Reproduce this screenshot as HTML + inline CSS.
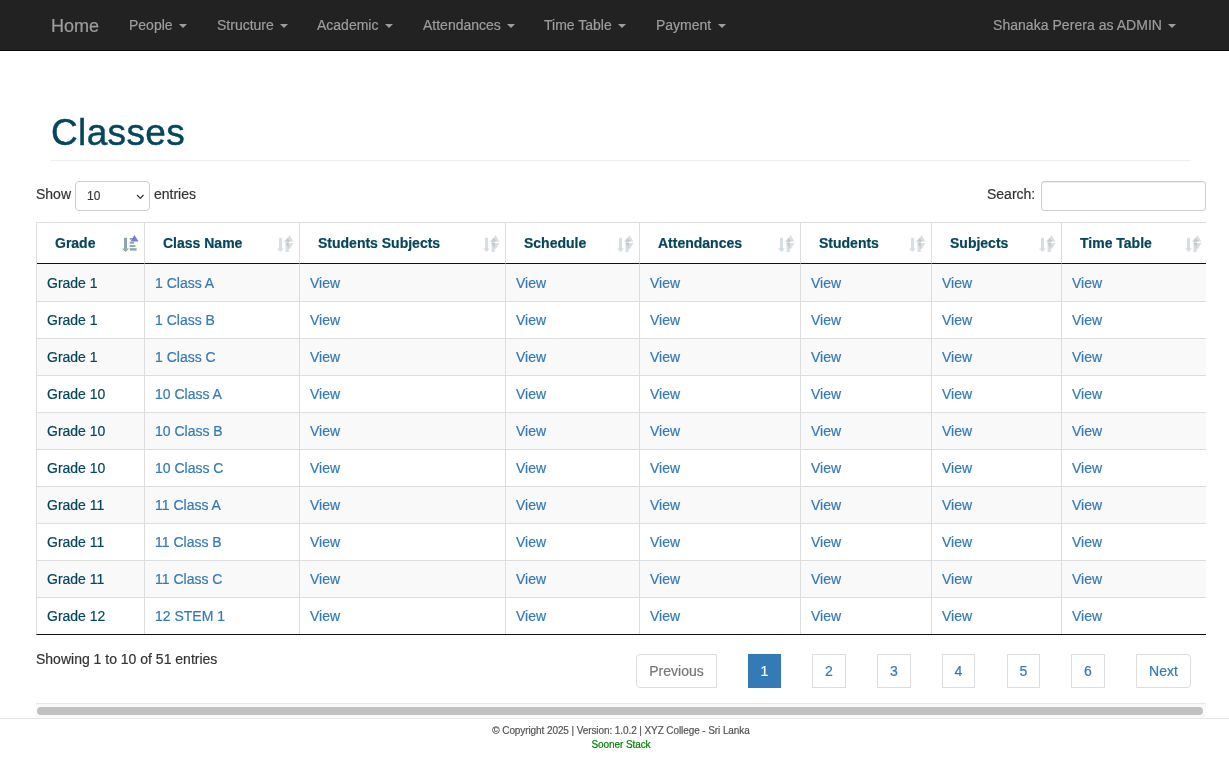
<!DOCTYPE html>
<html><head><meta charset="utf-8"><title>Classes</title>
<style>
*{box-sizing:border-box}
html,body{margin:0;padding:0}
body{width:1229px;height:766px;overflow:hidden;background:#fff;font-family:"Liberation Sans",sans-serif;font-size:14px;line-height:20px;color:#04465c;position:relative}
a{color:#337ab7;text-decoration:none}
.nav{position:absolute;left:0;top:0;width:1229px;height:51px;background:#222;border-bottom:1px solid #080808;color:#9d9d9d}
.nav span{position:absolute;top:15px;white-space:nowrap;line-height:20px}
.nav .brand{font-size:18px;left:51px;top:16px}
.caret{display:inline-block;width:0;height:0;margin-left:2.5px;vertical-align:middle;border-top:4px solid #9d9d9d;border-right:4px solid transparent;border-left:4px solid transparent}
h1{position:absolute;left:51px;top:113px;margin:0;font-size:37px;line-height:40px;font-weight:normal;color:#04465c;white-space:nowrap;letter-spacing:.35px;-webkit-text-stroke:.45px #04465c}
.hr{position:absolute;left:51px;top:160px;width:1140px;height:1px;background:#eee}
.len,.len2,.srch,.info{color:#333}
.len{position:absolute;left:36px;top:184px;white-space:nowrap}
.sel{position:absolute;left:75px;top:181px;width:75px;height:30px;border:1px solid #ccc;border-radius:4px;background:#fff;font-size:12px;color:#3a3a3a;line-height:28px;padding-left:11px}
.len2{position:absolute;left:154px;top:184px}
.srch{position:absolute;left:987px;top:184px}
.inp{position:absolute;left:1041px;top:181px;width:165px;height:30px;border:1px solid #ccc;border-radius:3px;background:#fff;box-shadow:inset 0 1px 1px rgba(0,0,0,.075)}
.tw{position:absolute;left:36px;top:222px;width:1170px;height:414px;overflow:hidden}
table{border-collapse:separate;border-spacing:0;table-layout:fixed;width:1171px;border-top:1px solid #ddd;border-left:1px solid #ddd;border-bottom:1px solid #111}
th{position:relative;padding:10px 18px;text-align:left;font-weight:bold;border-bottom:1px solid #111;border-right:1px solid #ddd;height:41px;white-space:nowrap}
td{padding:8px 10px;border-top:1px solid #ddd;border-right:1px solid #ddd;height:37px;white-space:nowrap}
tbody tr:first-child td{border-top:0;height:37px;padding-top:9px}
tbody tr:nth-child(odd) td{background:#f9f9f9}
.si{position:absolute;right:1px;top:10px}
.info{position:absolute;left:36px;top:649px}
.pg,.pb{position:absolute;top:654px;height:34px;border:1px solid #ddd;background:#fff;padding:6px 12px;line-height:20px;text-align:center}
.pg{width:34px;padding:6px 0}
.pg.act{background:#337ab7;border-color:#337ab7;color:#fff}
.sb{position:absolute;left:36px;top:703px;width:1170px;height:15px;background:#fafafa;border-top:1px solid #e8e8e8}
.sb i{position:absolute;left:1px;top:3px;width:1166px;height:8px;border-radius:4px;background:#c1c1c1}
.fl{position:absolute;left:0;top:718px;width:1229px;height:1px;background:#e7e7e7}
.ft{position:absolute;left:0;width:1242px;text-align:center;font-size:10px;line-height:14px;color:#555;letter-spacing:-.09px}
#L{position:absolute;left:0;top:0;width:1229px;height:766px;will-change:transform;-webkit-text-stroke:.2px}
</style></head><body><div id="L">
<div class="nav">
<span class="brand">Home</span>
<span style="left:129px">People <b class="caret"></b></span>
<span style="left:217px">Structure <b class="caret"></b></span>
<span style="left:317px">Academic <b class="caret"></b></span>
<span style="left:423px">Attendances <b class="caret"></b></span>
<span style="left:544px">Time Table <b class="caret"></b></span>
<span style="left:656px">Payment <b class="caret"></b></span>
<span style="left:993px;letter-spacing:.04px">Shanaka Perera as ADMIN <b class="caret"></b></span>
</div>
<h1>Classes</h1>
<div class="hr"></div>
<div class="len">Show</div>
<div class="sel">10<svg width="9" height="6" viewBox="0 0 9 6" style="position:absolute;left:60px;top:11.5px"><path d="M1.1 1l3.2 3.3L7.5 1" fill="none" stroke="#333" stroke-width="1.2"/></svg></div>
<div class="len2">entries</div>
<div class="srch">Search:</div>
<div class="inp"></div>
<div class="tw"><table><thead><tr><th style="width:108px">Grade<svg class="si" width="22" height="22" viewBox="0 0 22 22"><g fill="#8fa5ae"><rect x="3" y="4.8" width="3" height="11"/><path d="M0.9 15.4h7.2l-3.6 3.6z"/><rect x="8.7" y="5" width="3.3" height="1.7"/><rect x="8.7" y="8.8" width="4.5" height="1.9"/><rect x="8.7" y="12.1" width="5.7" height="1.9"/><rect x="8.7" y="15.2" width="6.9" height="2.4"/></g><path d="M13.5 1.9l4 6.7h-8z" fill="#6f6ed2" fill-opacity="0.9"/></svg></th><th style="width:155px">Class Name<svg class="si" width="22" height="22" viewBox="0 0 22 22"><path d="M13.5 1.9l4 6.7h-8z" fill="#dedede"/><path d="M9.5 10.1h8l-4 6.5z" fill="#dedede"/><g fill="#8fa5ae" fill-opacity="0.36"><rect x="3" y="4.8" width="3" height="11"/><path d="M0.9 15.4h7.2l-3.6 3.6z"/><rect x="9.5" y="8.6" width="3.3" height="10.4"/><path d="M7.7 8.8h7.2l-3.6-4z"/></g></svg></th><th style="width:206px">Students Subjects<svg class="si" width="22" height="22" viewBox="0 0 22 22"><path d="M13.5 1.9l4 6.7h-8z" fill="#dedede"/><path d="M9.5 10.1h8l-4 6.5z" fill="#dedede"/><g fill="#8fa5ae" fill-opacity="0.36"><rect x="3" y="4.8" width="3" height="11"/><path d="M0.9 15.4h7.2l-3.6 3.6z"/><rect x="9.5" y="8.6" width="3.3" height="10.4"/><path d="M7.7 8.8h7.2l-3.6-4z"/></g></svg></th><th style="width:134px">Schedule<svg class="si" width="22" height="22" viewBox="0 0 22 22"><path d="M13.5 1.9l4 6.7h-8z" fill="#dedede"/><path d="M9.5 10.1h8l-4 6.5z" fill="#dedede"/><g fill="#8fa5ae" fill-opacity="0.36"><rect x="3" y="4.8" width="3" height="11"/><path d="M0.9 15.4h7.2l-3.6 3.6z"/><rect x="9.5" y="8.6" width="3.3" height="10.4"/><path d="M7.7 8.8h7.2l-3.6-4z"/></g></svg></th><th style="width:161px">Attendances<svg class="si" width="22" height="22" viewBox="0 0 22 22"><path d="M13.5 1.9l4 6.7h-8z" fill="#dedede"/><path d="M9.5 10.1h8l-4 6.5z" fill="#dedede"/><g fill="#8fa5ae" fill-opacity="0.36"><rect x="3" y="4.8" width="3" height="11"/><path d="M0.9 15.4h7.2l-3.6 3.6z"/><rect x="9.5" y="8.6" width="3.3" height="10.4"/><path d="M7.7 8.8h7.2l-3.6-4z"/></g></svg></th><th style="width:131px">Students<svg class="si" width="22" height="22" viewBox="0 0 22 22"><path d="M13.5 1.9l4 6.7h-8z" fill="#dedede"/><path d="M9.5 10.1h8l-4 6.5z" fill="#dedede"/><g fill="#8fa5ae" fill-opacity="0.36"><rect x="3" y="4.8" width="3" height="11"/><path d="M0.9 15.4h7.2l-3.6 3.6z"/><rect x="9.5" y="8.6" width="3.3" height="10.4"/><path d="M7.7 8.8h7.2l-3.6-4z"/></g></svg></th><th style="width:130px">Subjects<svg class="si" width="22" height="22" viewBox="0 0 22 22"><path d="M13.5 1.9l4 6.7h-8z" fill="#dedede"/><path d="M9.5 10.1h8l-4 6.5z" fill="#dedede"/><g fill="#8fa5ae" fill-opacity="0.36"><rect x="3" y="4.8" width="3" height="11"/><path d="M0.9 15.4h7.2l-3.6 3.6z"/><rect x="9.5" y="8.6" width="3.3" height="10.4"/><path d="M7.7 8.8h7.2l-3.6-4z"/></g></svg></th><th style="width:146px">Time Table<svg class="si" width="22" height="22" viewBox="0 0 22 22"><path d="M13.5 1.9l4 6.7h-8z" fill="#dedede"/><path d="M9.5 10.1h8l-4 6.5z" fill="#dedede"/><g fill="#8fa5ae" fill-opacity="0.36"><rect x="3" y="4.8" width="3" height="11"/><path d="M0.9 15.4h7.2l-3.6 3.6z"/><rect x="9.5" y="8.6" width="3.3" height="10.4"/><path d="M7.7 8.8h7.2l-3.6-4z"/></g></svg></th></tr></thead><tbody>
<tr><td>Grade 1</td><td><a>1 Class A</a></td><td><a>View</a></td><td><a>View</a></td><td><a>View</a></td><td><a>View</a></td><td><a>View</a></td><td><a>View</a></td></tr>
<tr><td>Grade 1</td><td><a>1 Class B</a></td><td><a>View</a></td><td><a>View</a></td><td><a>View</a></td><td><a>View</a></td><td><a>View</a></td><td><a>View</a></td></tr>
<tr><td>Grade 1</td><td><a>1 Class C</a></td><td><a>View</a></td><td><a>View</a></td><td><a>View</a></td><td><a>View</a></td><td><a>View</a></td><td><a>View</a></td></tr>
<tr><td>Grade 10</td><td><a>10 Class A</a></td><td><a>View</a></td><td><a>View</a></td><td><a>View</a></td><td><a>View</a></td><td><a>View</a></td><td><a>View</a></td></tr>
<tr><td>Grade 10</td><td><a>10 Class B</a></td><td><a>View</a></td><td><a>View</a></td><td><a>View</a></td><td><a>View</a></td><td><a>View</a></td><td><a>View</a></td></tr>
<tr><td>Grade 10</td><td><a>10 Class C</a></td><td><a>View</a></td><td><a>View</a></td><td><a>View</a></td><td><a>View</a></td><td><a>View</a></td><td><a>View</a></td></tr>
<tr><td>Grade 11</td><td><a>11 Class A</a></td><td><a>View</a></td><td><a>View</a></td><td><a>View</a></td><td><a>View</a></td><td><a>View</a></td><td><a>View</a></td></tr>
<tr><td>Grade 11</td><td><a>11 Class B</a></td><td><a>View</a></td><td><a>View</a></td><td><a>View</a></td><td><a>View</a></td><td><a>View</a></td><td><a>View</a></td></tr>
<tr><td>Grade 11</td><td><a>11 Class C</a></td><td><a>View</a></td><td><a>View</a></td><td><a>View</a></td><td><a>View</a></td><td><a>View</a></td><td><a>View</a></td></tr>
<tr><td>Grade 12</td><td><a>12 STEM 1</a></td><td><a>View</a></td><td><a>View</a></td><td><a>View</a></td><td><a>View</a></td><td><a>View</a></td><td><a>View</a></td></tr>
</tbody></table></div>
<div class="info">Showing 1 to 10 of 51 entries</div>
<a class="pb" style="left:636px;width:81px;color:#777;border-radius:4px 0 0 4px">Previous</a>
<a class="pg act" style="left:748px;width:33px">1</a><a class="pg" style="left:812px;width:34px">2</a><a class="pg" style="left:877px;width:34px">3</a><a class="pg" style="left:942px;width:33px">4</a><a class="pg" style="left:1007px;width:33px">5</a><a class="pg" style="left:1071px;width:34px">6</a>
<a class="pb" style="left:1136px;width:55px;border-radius:0 4px 4px 0">Next</a>
<div class="sb"><i></i></div>
<div class="fl"></div>
<div class="ft" style="top:724px">© Copyright 2025 | Version: 1.0.2 | XYZ College - Sri Lanka</div>
<div class="ft" style="top:738px;color:#008000">Sooner Stack</div>
</div></body></html>
